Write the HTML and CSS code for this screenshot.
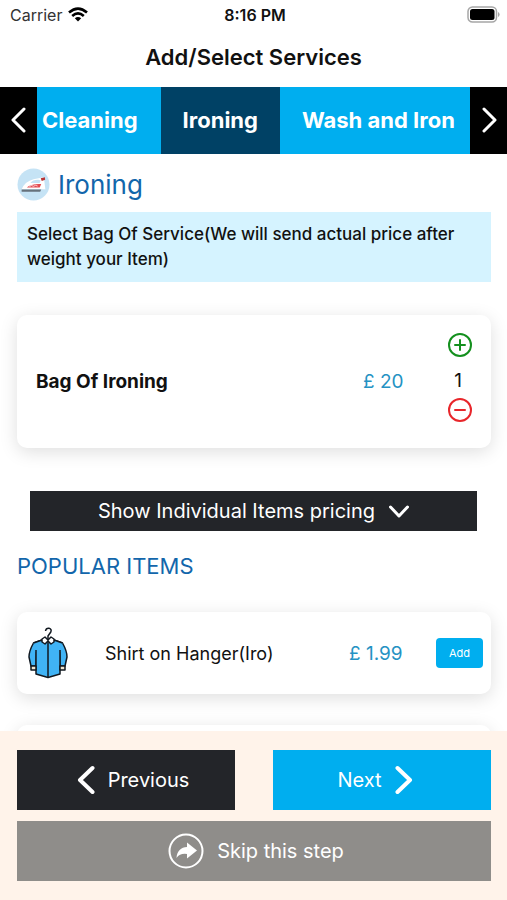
FILE: index.html
```html
<!DOCTYPE html>
<html lang="en">
<head>
<meta charset="utf-8">
<meta name="viewport" content="width=device-width, initial-scale=1">
<title>Add/Select Services</title>
<link rel="stylesheet" href="styles.css">
</head>
<body>
<div class="app">
  <div class="status">
    <div class="carrier">Carrier
      <svg width="20" height="15" viewBox="0 0 20 15" aria-hidden="true"><g fill="none" stroke="#000" stroke-width="2.6"><path d="M1 5.5Q10-2.4 19 5.5"/><path d="M4.2 8.9Q10 3.8 15.8 8.9"/></g><path d="M6.8 11.3Q10 8.600 13.2 11.3L10 14.6Z"/></svg>
    </div>
    <div class="time">8:16 PM</div>
    <svg class="battery" width="33" height="17" viewBox="0 0 33 17" aria-hidden="true"><rect x="1" y="1" width="28.500" height="15" rx="4.500" fill="none" stroke="#a6a6a6" stroke-width="1.500"/><rect x="3" y="3" width="24.500" height="11" rx="2.500"/><path d="M31 6v5q1.600-.8 1.600-2.500T31 6" fill="#a6a6a6"/></svg>
  </div>
  <header class="title"><h1>Add/Select Services</h1></header>
  <nav class="tabs" aria-label="Services">
    <button class="scroll" aria-label="Previous services"><svg width="16" height="26" viewBox="0 0 16 26"><path d="M13 2 2 13l11 11"/></svg></button>
    <button class="tab first">Cleaning</button>
    <button class="tab active">Ironing</button>
    <button class="tab last">Wash and Iron</button>
    <button class="scroll" aria-label="More services"><svg width="16" height="26" viewBox="0 0 16 26"><path d="m3 2 11 11L3 24"/></svg></button>
  </nav>
  <main class="content">
    <h2 class="service">
      <svg width="33" height="33" viewBox="0 0 32 32" aria-hidden="true"><circle cx="16" cy="16" r="15.500" fill="#c5e3f5"/><path d="M4.500 20.500Q8 13 16 11L26 9l1.500 11.500Z" fill="#fff"/><path d="M13 14.500q3-3.500 8-3l2 .6-1 2.400Z" fill="#c5e3f5"/><path d="m23 10 4-1 .3 2.500-3.300 1.200Z" fill="#b73535"/><path d="M9.500 19q4-4 14-3.500l-1.500 3.500Z" fill="#e34b50"/><path d="m12 18 2-1 2 .7 2-.9 2 .7" fill="none" stroke="#fff" stroke-width=".7"/><path d="M4.500 20.800h19l-1 2.200h-18Z" fill="#66727c"/></svg>
      Ironing
    </h2>
    <p class="notice">Select Bag Of Service(We will send actual price after weight your Item)</p>
    <section class="card bag">
      <h3>Bag Of Ironing</h3>
      <span class="price">£ 20</span>
      <div class="stepper">
        <button class="plus" aria-label="Add one bag"><svg width="24" height="24" viewBox="0 0 24 24"><circle cx="12" cy="12" r="11"/><path d="M7 12h10M12 7v10"/></svg></button>
        <output>1</output>
        <button class="minus" aria-label="Remove one bag"><svg width="24" height="24" viewBox="0 0 24 24"><circle cx="12" cy="12" r="11"/><path d="M7 12h10"/></svg></button>
      </div>
    </section>
    <button class="toggle">Show Individual Items pricing
      <svg width="20" height="13" viewBox="0 0 20 13" aria-hidden="true"><path d="m1.500 2 8.500 9 8.500-9"/></svg>
    </button>
    <h2 class="popular">POPULAR ITEMS</h2>
    <section class="card item">
      <svg class="shirt" width="40" height="52" viewBox="0 0 40 52" fill="#40b3f5" stroke="#111820" stroke-width="1.500" stroke-linejoin="round" aria-hidden="true"><path d="M17.500 4Q18 1 21 1.300 24 2 22.800 5L20 9v3" fill="none"/><path d="m14 13-8.500 3Q1 24 1 30l2 9h5l.5-14" /><path d="m26 13 8.500 3Q39 24 39 30l-2 9h-5l-.5-14"/><path d="M14 13 5.500 16 8 23v24l12 3 12-3V23l2.500-7-8.500-3-6 3Z" stroke="none"/><path d="M14 13 5.500 16M26 13l8.500 3M8 23v24l12 3.500L32 47V23M20 15v35" fill="none"/><path d="M3 39h5v4H3ZM32 39h5v4h-5Z" fill="#f1e5cf"/><path d="m20 13-3-3-3 2v3l3 2 3-3 3 3 3-2v-3l-3-2Z" fill="#fff"/></svg>
      <span class="name">Shirt on Hanger(Iro)</span>
      <span class="price">£ 1.99</span>
      <button class="add">Add</button>
    </section>
    <section class="card item" aria-hidden="true"></section>
  </main>
  <footer class="actions">
    <button class="dark"><svg width="18" height="30" viewBox="0 0 18 30" aria-hidden="true"><path d="M15.500 3 3 15l12.500 12"/></svg>Previous</button>
    <button class="blue">Next<svg width="18" height="30" viewBox="0 0 18 30" aria-hidden="true"><path d="m2.500 3 12.500 12L2.500 27"/></svg></button>
    <button class="skip"><svg width="36" height="36" viewBox="0 0 36 36" aria-hidden="true"><circle cx="18" cy="18" r="16.500"/><path class="solid" d="M8.500 25C9 18 13 14 19 14V9.500L29 17.500 19 25.500V21Q12 20 8.500 25Z"/></svg>Skip this step</button>
  </footer>
</div>
</body>
</html>
```
FILE: styles.css
```css
* { box-sizing: border-box; }
body { margin: 0; background: #fff; color: #111; font-family: Inter, "Liberation Sans", sans-serif; }
h1, h2, h3, p { margin: 0; }
button { border: 0; padding: 0; margin: 0; font: inherit; color: #fff; display: flex; align-items: center; justify-content: center; cursor: pointer; background: none; }
button svg { flex: none; fill: none; stroke: currentColor; stroke-linecap: round; stroke-linejoin: round; }
.app { display: flex; flex-direction: column; height: 100vh; overflow: hidden; }

.status { flex: none; display: grid; grid-template-columns: 1fr auto 1fr; align-items: center; height: 29px; padding: 0 7px 0 10px; font-size: 16px; }
.carrier { display: flex; align-items: center; gap: 6px; color: #333; }
.time { font-weight: 600; }
.battery { justify-self: end; }
.title { flex: none; height: 58px; padding-top: 13px; text-align: center; }
.title h1 { font-size: 22px; line-height: 30px; font-weight: 600; }

.tabs { flex: none; display: flex; height: 67px; background: #00aeef; }
.scroll { flex: none; width: 37px; padding-bottom: 2px; background: #000; }
.scroll svg { stroke-width: 3; }
.tab { flex: none; padding: 0 22px 2px; font-size: 22px; font-weight: 700; white-space: nowrap; }
.tab.first { padding: 0 23px 2px 5px; }
.tab.active { background: #004165; }
.tab.last { flex: 1; min-width: 0; padding-right: 0; justify-content: flex-start; }

.content { flex: 1; min-height: 0; overflow: hidden; padding: 14px 16px 0 17px; display: flex; flex-direction: column; }
.content > * { flex: none; }
.service { display: flex; align-items: center; gap: 8px; height: 34px; padding-bottom: 2px; font-size: 26px; font-weight: 400; color: #1266ab; }
.notice { margin-top: 10px; padding: 10px; background: #d5f3ff; font-size: 17px; line-height: 25px; font-weight: 500; }
.card { border-radius: 10px; background: #fff; box-shadow: 0 4px 18px rgba(0, 0, 0, .13); display: grid; align-items: center; }
.bag { margin-top: 33px; height: 133px; padding: 0 19px; grid-template-columns: 1fr 85px 24px; }
.bag h3 { font-size: 19px; font-weight: 700; }
.price { font-size: 19px; color: #2592c3; white-space: nowrap; }
.stepper { display: flex; flex-direction: column; align-items: center; padding-bottom: 8px; }
.stepper output { height: 41px; padding: 12px 4px 0 0; font-size: 19px; line-height: 24px; }
.stepper svg { stroke-width: 2; }
.plus { color: #14901e; }
.minus { color: #e8262b; }
.toggle { margin: 43px 14px 0 13px; height: 40px; gap: 14px; background: #232529; font-size: 20px; }
.toggle svg { stroke-width: 3; }
.popular { margin-top: 20px; font-size: 22px; line-height: 30px; font-weight: 400; color: #1266ab; }
.item { margin-top: 31px; height: 82px; padding: 0 8px 0 11px; grid-template-columns: 77px 1fr 87px 47px; }
.name { font-size: 18px; }
.add { height: 30px; border-radius: 4px; background: #00aeef; font-size: 11px; }

.actions { flex: none; display: grid; grid-template-columns: 1fr 1fr; gap: 11px 38px; padding: 19px 16px 19px 17px; background: #fff3ea; font-size: 20px; }
.actions button { height: 60px; gap: 13px; }
.actions svg { stroke-width: 4; }
.actions .dark { padding-left: 14px; background: #232529; }
.actions .blue { padding-right: 14px; background: #00aeef; }
.actions .skip { grid-column: 1 / -1; padding-left: 4px; background: #8f8d8a; }
.actions .skip svg { stroke-width: 2; }
.skip .solid { fill: currentColor; stroke: none; }
```
